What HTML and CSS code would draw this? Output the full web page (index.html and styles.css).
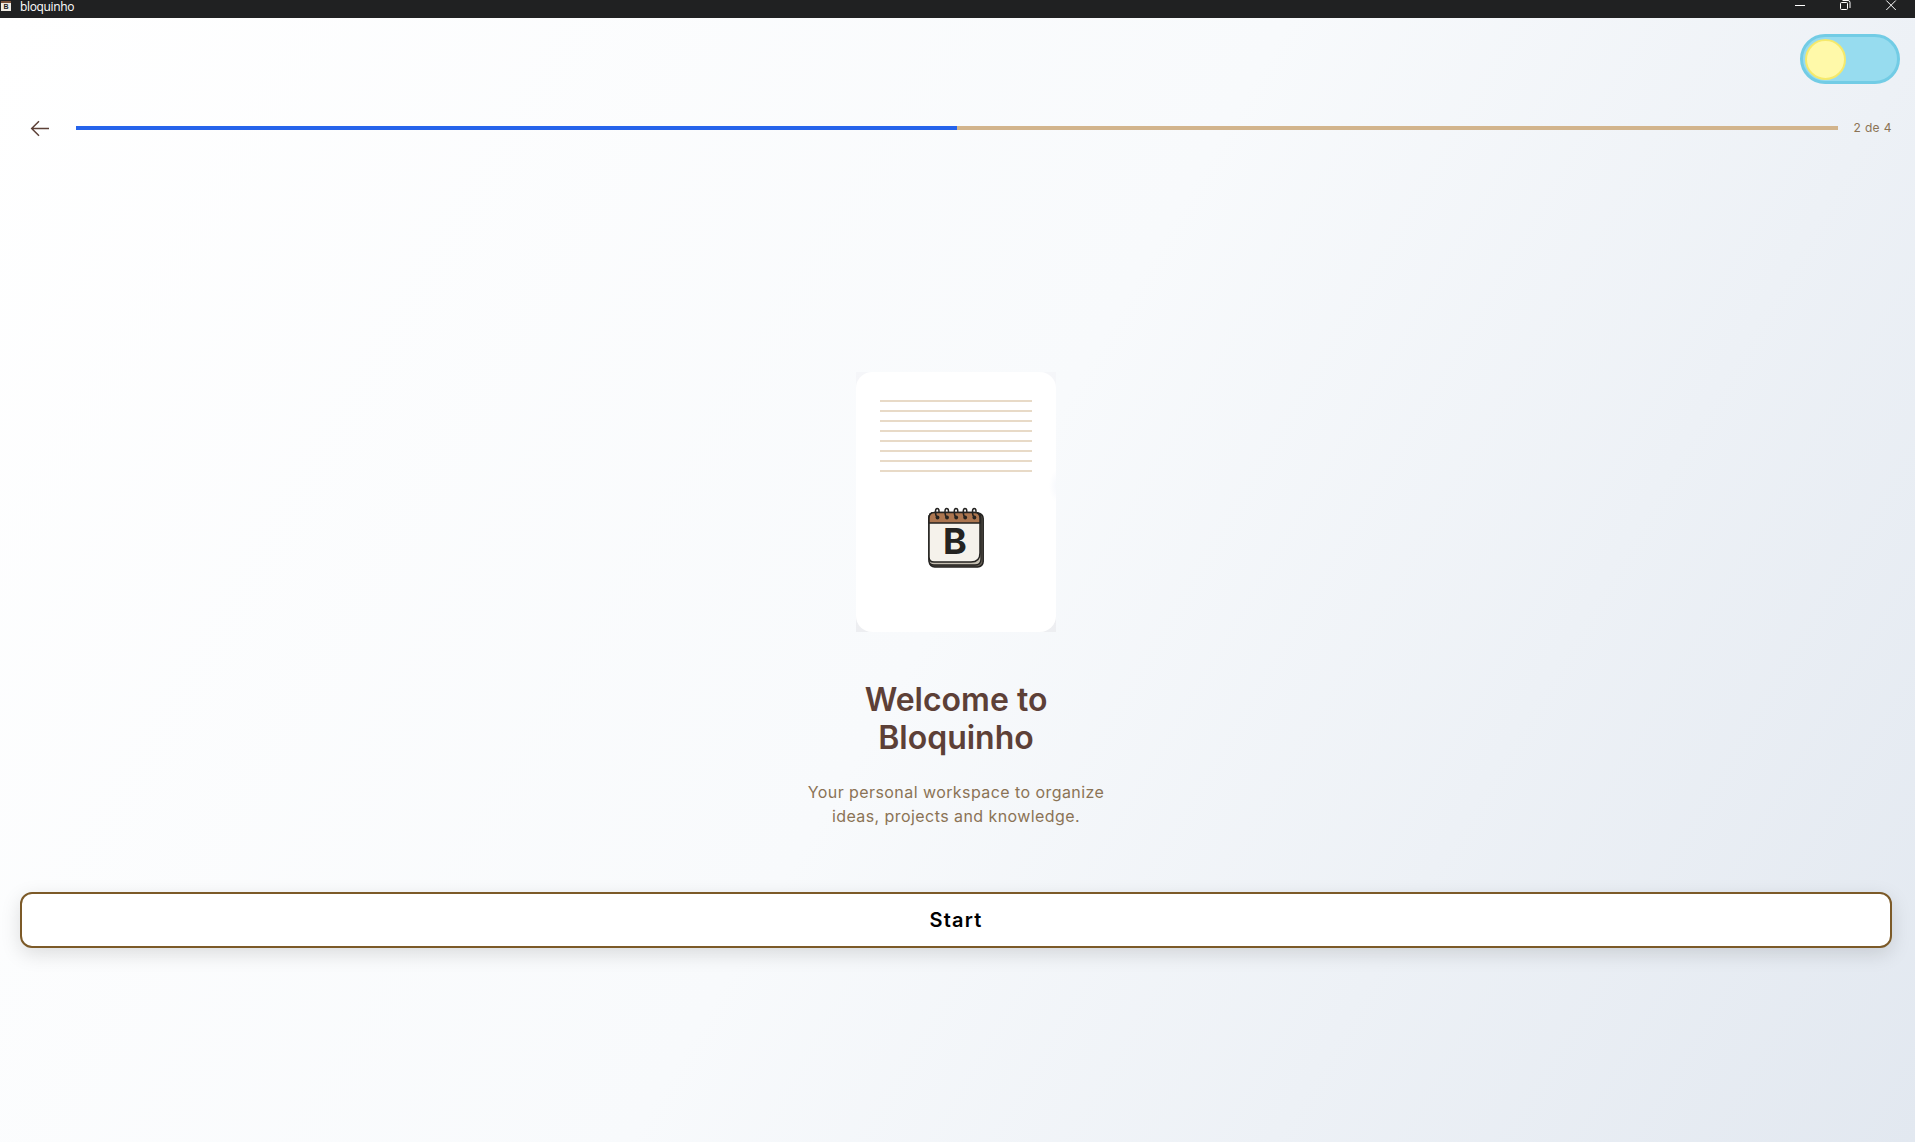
FILE: index.html
```
<!DOCTYPE html>
<html lang="en">
<head>
<meta charset="utf-8">
<title>bloquinho</title>
<link rel="stylesheet" href="styles.css">
</head>
<body>
<header class="titlebar">
  <svg class="app-icon" width="12" height="11" viewBox="0 0 12 11"><path fill="#7a5138" d="M1 1h10v3H1z"/><path fill="#eeeae2" d="M1 3h10v8H1z"/><text x="6" y="9" text-anchor="middle" class="tiny-letter">B</text></svg>
  <span class="app-name">bloquinho</span>
  <div class="window-controls">
    <svg width="46" height="18" viewBox="0 0 46 18"><path d="M18 5.5h10"/></svg>
    <svg width="46" height="18" viewBox="0 0 46 18"><rect x="17.5" y="2.5" width="7" height="7" rx="1"/><path d="M19.5.5h5.500q2 0 2 2V8"/></svg>
    <svg width="46" height="18" viewBox="0 0 46 18"><path d="m17.300.500 9.500 9.500M26.800.500 17.300 10"/></svg>
  </div>
</header>
<main class="screen">
  <div class="toggle-row"><button class="theme-toggle" aria-label="Theme"><span class="sun"></span></button></div>
  <nav class="progress-row">
    <svg class="back" width="20" height="18" viewBox="0 0 20 18"><path d="M19 9.500H1.800M9 2.200 1.700 9.500 9 16.800"/></svg>
    <div class="track"><div class="fill" style="width:50%"></div></div>
    <span class="step">2 de 4</span>
  </nav>
  <section class="welcome">
    <div class="sheet-frame">
      <div class="sheet">
        <div class="lines"><i></i><i></i><i></i><i></i><i></i><i></i><i></i><i></i></div>
        <svg class="logo" width="60" height="64" viewBox="0 0 60 64">
          <g stroke="#242321" stroke-linejoin="round">
            <rect x="3.200" y="6" width="54" height="54" rx="5.500" fill="#655e54" stroke-width="1.500"/>
            <path d="M3 50V11q0-5 5-5h42q5 0 5 5v41q0 6-6 6H8q-5 0-5-5z" fill="#c5bfb2" stroke-width="1.300"/>
            <path d="M3 50V11q0-5.500 5.500-5.500h40q5.500 0 5.500 5.500v35q0 9-9 9H8q-5 0-5-5z" fill="#f5f2eb" stroke-width="1.500"/>
            <path d="M3 16v-5q0-5.500 5.500-5.500h40q5.500 0 5.500 5.500v5z" fill="#ac7650" stroke-width="1.500"/>
          </g>
          <g fill="none" stroke="#242321" stroke-width="1.500">
            <path id="ring" d="M13 5V4q0-2.500-1.800-2.500T9.500 5q0 4 2 5.500"/>
            <use href="#ring" x="9.500"/><use href="#ring" x="18.800"/><use href="#ring" x="27.800"/><use href="#ring" x="37"/>
          </g>
          <g fill="#242321"><circle cx="11.500" cy="10.500" r="1.900"/><circle cx="21" cy="10.500" r="1.900"/><circle cx="30.200" cy="10.500" r="1.900"/><circle cx="39.200" cy="10.500" r="1.900"/><circle cx="48.400" cy="10.500" r="1.900"/></g>
          <text x="29" y="47.300" text-anchor="middle" class="logo-letter">B</text>
        </svg>
      </div>
    </div>
    <h1>Welcome to<br>Bloquinho</h1>
    <p>Your personal workspace to organize<br>ideas, projects and knowledge.</p>
  </section>
  <button class="start">Start</button>
</main>
</body>
</html>
```
FILE: styles.css
```
* { box-sizing: border-box; }
body {
  margin: 0;
  height: 1142px;
  display: flex;
  flex-direction: column;
  font-family: Inter, sans-serif;
  overflow: hidden;
}
.titlebar {
  height: 18px;
  flex: none;
  display: flex;
  align-items: flex-start;
  background: #202122;
  color: #fff;
}
.app-icon { flex: none; }
.tiny-letter { font: 700 7px "Liberation Sans", sans-serif; fill: #222; }
.app-name { margin-left: 8px; font: 12px/14px "Open Sans", sans-serif; letter-spacing: -.35px; }
.window-controls { margin-left: auto; display: flex; }
.window-controls svg { fill: none; stroke: #fff; stroke-width: 1; }
.screen {
  flex: 1;
  display: flex;
  flex-direction: column;
  padding: 16px 15px 0 20px;
  background: linear-gradient(120.400deg, #fff 0%, #f8fafc 50%, #e2e8f0 100%);
}
.toggle-row { display: flex; justify-content: flex-end; }
.theme-toggle {
  width: 100px;
  height: 50px;
  padding: 2px 1.500px;
  display: flex;
  align-items: center;
  border: 3px solid #72cce5;
  border-radius: 25px;
  background: #97dcef;
}
.sun {
  width: 41px;
  height: 41px;
  border: 2px solid #f5e96b;
  border-radius: 50%;
  background: #fff9a9;
}
.progress-row {
  display: flex;
  align-items: center;
  height: 20px;
  margin: 34px 8px 0 0;
}
.back { flex: none; margin: 0 26px 0 10px; fill: none; stroke: #5d4037; stroke-width: 1.500; }
.track { flex: 1; height: 4px; background: #d2b48c; }
.fill { height: 100%; background: #2563eb; }
.step {
  width: 54.500px;
  padding-left: 16px;
  font-size: 12px;
  line-height: 16px;
  letter-spacing: .35px;
  color: #8b7355;
  white-space: nowrap;
}
.welcome {
  display: flex;
  flex-direction: column;
  align-items: center;
  margin: 234px 8px 0 0;
}
.sheet-frame { width: 200px; height: 260px; background: linear-gradient(#f5f6f9, #edeef1); }
.sheet {
  height: 100%;
  display: flex;
  flex-direction: column;
  align-items: center;
  padding-top: 28px;
  background: radial-gradient(8px 16px at 201px 114px, #f6f8fc, #fff);
  border-radius: 16px;
}
.lines { width: 152px; display: grid; gap: 8px; }
.lines i { height: 2px; background: #e8dac7; }
.logo { margin: 35px 0 0; }
.logo-letter { font: 700 36px Inter, sans-serif; fill: #242321; }
h1 {
  margin: 49px 0 0;
  font-size: 32px;
  font-weight: 600;
  line-height: 38px;
  text-align: center;
  color: #5d4037;
}
p {
  margin: 23px 0 0;
  font-size: 16px;
  line-height: 24px;
  letter-spacing: .43px;
  text-align: center;
  color: #8b7355;
}
.start {
  height: 56px;
  flex: none;
  margin: 64px 8px 0 0;
  border: 2px solid #7c5a28;
  border-radius: 12px;
  background: #fff;
  color: #000;
  font: 600 20px Inter, sans-serif;
  letter-spacing: 1.200px;
  box-shadow: 0 6px 20px rgba(0, 0, 0, .130);
}
```
